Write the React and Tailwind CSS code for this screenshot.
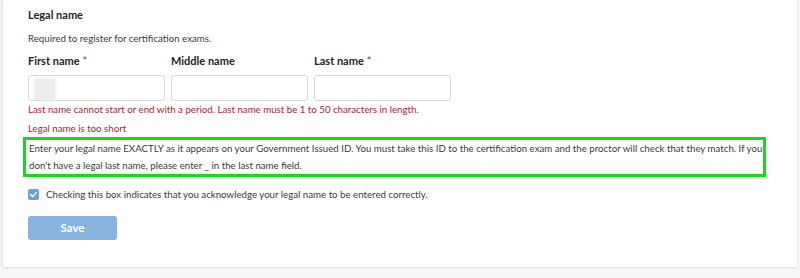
import React, { useState } from 'react';

const font = { fontFamily: 'Lato, "Noto Sans", sans-serif' };

const Field = ({ label, required, blurred }) => (
  <div className="flex flex-col w-[137px]">
    <label className="text-[11px] font-bold text-[#252423] leading-[17px] mb-[6px]">
      {label}
      {required && <span className="text-[#a4262c] font-normal ml-[3px]">*</span>}
    </label>
    <div className="relative h-[26px] rounded-[3px] border border-[#d6d6d6] bg-white">
      {blurred && <div className="absolute left-[5px] top-[2px] w-[22px] h-[22px] bg-[#ececec] blur-[1px]" />}
    </div>
  </div>
);

const App = () => {
  const [checked, setChecked] = useState(true);

  return (
    <div className="w-[800px] h-[278px] bg-[#f7f7f7] overflow-hidden" style={font}>
      <div className="ml-[2px] mr-[3px] h-[267px] bg-white border-l border-[#e6e6e6] shadow-[0_1px_2px_rgba(0,0,0,0.12)] pl-[25px] pt-[6px]">
        <h2 className="text-[11px] font-bold text-[#252423] leading-[18px]">Legal name</h2>
        <p className="mt-[6px] text-[9.7px] text-[#3b3a39] leading-[16px]">Required to register for certification exams.</p>

        <div className="mt-[6px] flex gap-[6px]">
          <Field label="First name" required blurred />
          <Field label="Middle name" />
          <Field label="Last name" required />
        </div>

        <p className="text-[9.7px] text-[#a4262c] leading-[16px]">
          Last name cannot start or end with a period. Last name must be 1 to 50 characters in length.
        </p>
        <p className="mt-[3px] text-[9.7px] text-[#a4262c] leading-[16px]">Legal name is too short</p>

        <div className="mt-[1px] -ml-[5px] w-[743px] border-[3px] border-[#1fd41f] pl-[3px]">
          <p className="text-[9.7px] text-[#3b3a39] leading-[17px]">
            Enter your legal name EXACTLY as it appears on your Government Issued ID. You must take this ID to the certification exam and the proctor will check that they match. If you don't have a legal last name, please enter _ in the last name field.
          </p>
        </div>

        <label className="mt-[9px] flex items-center gap-[7px] cursor-pointer">
          <span
            onClick={() => setChecked(!checked)}
            className="w-[11px] h-[11px] rounded-[2px] bg-[#6d9fd6] flex items-center justify-center"
          >
            {checked && (
              <svg width="9" height="9" viewBox="0 0 10 10" fill="none">
                <path d="M2 5.2 L4.1 7.3 L8 2.8" stroke="white" strokeWidth="1.4" strokeLinecap="round" strokeLinejoin="round" />
              </svg>
            )}
          </span>
          <span className="text-[9.7px] text-[#3b3a39] leading-[16px]">
            Checking this box indicates that you acknowledge your legal name to be entered correctly.
          </span>
        </label>

        <button className="mt-[14px] w-[89px] h-[24px] rounded-[3px] bg-[#88b3e0] text-white text-[11.5px] font-bold">
          Save
        </button>
      </div>
    </div>
  );
};

export default App;
